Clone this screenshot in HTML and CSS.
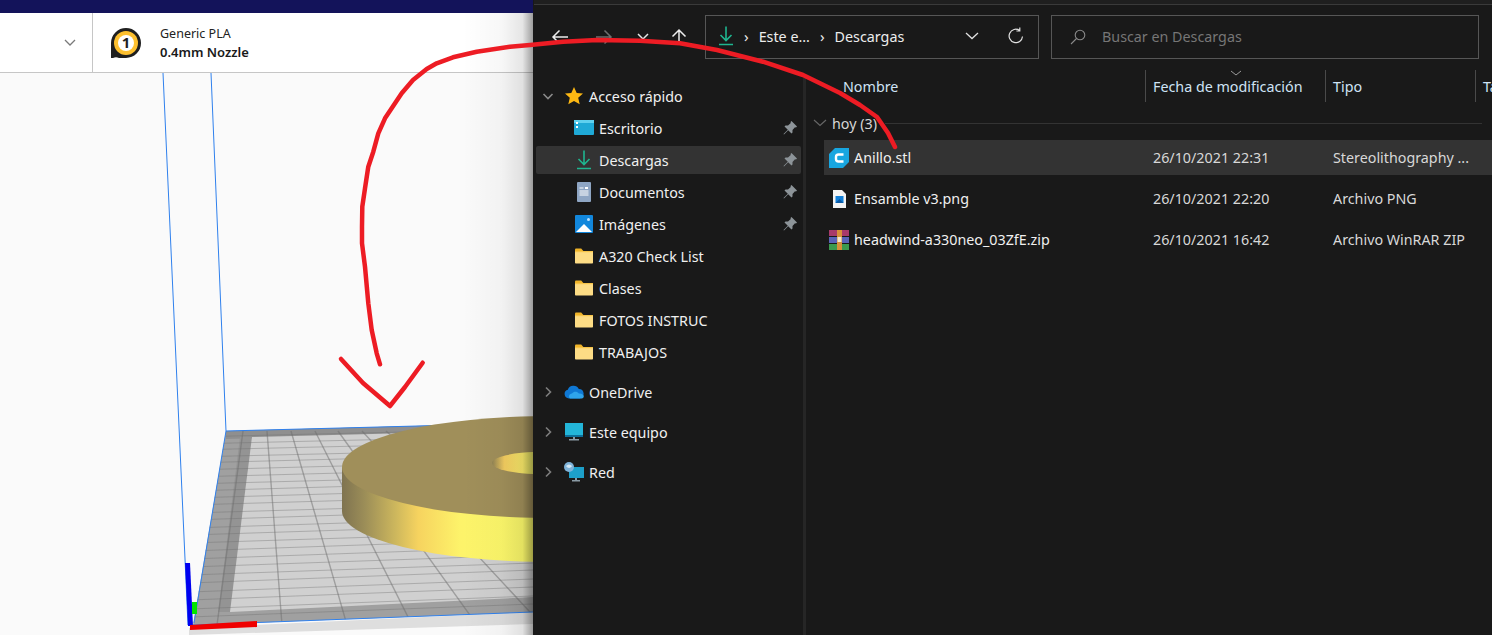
FILE: index.html
```html
<!DOCTYPE html>
<html lang="es">
<head>
  <meta charset="UTF-8" />
  <title>Descargas</title>
  <link rel="stylesheet" href="styles.css">
</head>
<body>
  <svg class="defs" width="0" height="0">
    <symbol id="folder" viewBox="0 0 20 16">
      <path d="M1 3V1.500C1 1 1.400.6 2 .6h5.200l2.200 2.400z" fill="#f0b429"/>
      <rect x="1" y="3" width="18" height="12.600" rx=".8" fill="#fddc85"/>
      <rect x="1" y="3" width="18" height="1.200" fill="#f7c448"/>
    </symbol>
    <symbol id="pin" viewBox="0 0 14 14">
      <path d="M8.500 0L14 5.500 13 6.500 12 6.200 9.500 9V11.500L8.500 12.500 5.200 9.200 1 13.500.5 13 4.800 8.800 1.500 5.500 2.500 4.500H5L7.800 2 7.500 1z" fill="#8d9499"/>
    </symbol>
    <symbol id="download" viewBox="0 0 16 20">
      <path d="M8 .5v14M2.500 9L8 14.500 13.500 9M1 18.500h14" fill="none" stroke="#1fb58f" stroke-width="1.600"/>
    </symbol>
    <symbol id="chev-right" viewBox="0 0 12 12">
      <path d="M4 1.500L8.500 6 4 10.500" fill="none" stroke="#7d7d7d" stroke-width="1.600"/>
    </symbol>
    <symbol id="chev-down" viewBox="0 0 12 12">
      <path d="M1.500 4L6 8.500 10.500 4" fill="none" stroke="#8a8a8a" stroke-width="1.600"/>
    </symbol>
  </svg>

  <div class="slicer">
    <div class="slicer-title"></div>
    <div class="slicer-bar">
      <div class="printer-select">
        <svg class="select-chev" width="12" height="8" viewBox="0 0 12 8"><path d="M1 1l5 5 5-5" fill="none" stroke="#7a7a7a" stroke-width="1.300"/></svg>
      </div>
      <div class="material">
        <svg class="nozzle" width="32" height="32" viewBox="0 0 32 32">
          <path d="M1 31V16A15 15 0 1 1 16 31H9A6 6 0 0 0 3 31z" fill="#1f1f1f"/>
          <circle cx="16" cy="16" r="12" fill="#fdc02f"/>
          <circle cx="16" cy="16" r="8" fill="#fff"/>
          <text class="nozzle-num" x="16" y="21" text-anchor="middle">1</text>
        </svg>
        <div class="material-text">
          <div class="material-name">Generic PLA</div>
          <div class="material-size">0.4mm Nozzle</div>
        </div>
      </div>
    </div>
    <div class="viewport">
      <svg class="scene" width="533" height="562" viewBox="0 73 533 562">
        <defs>
          <linearGradient id="ringSide" gradientUnits="userSpaceOnUse" x1="342" y1="0" x2="533" y2="0">
            <stop offset="0" stop-color="#7f7350"/>
            <stop offset=".12" stop-color="#9c8e58"/>
            <stop offset=".28" stop-color="#cdb75d"/>
            <stop offset=".4" stop-color="#f6d35f"/>
            <stop offset=".62" stop-color="#fdf36a"/>
            <stop offset="1" stop-color="#fdfb6b"/>
          </linearGradient>
          <linearGradient id="ringHole" gradientUnits="userSpaceOnUse" x1="492" y1="0" x2="533" y2="0">
            <stop offset="0" stop-color="#8f8254"/>
            <stop offset=".3" stop-color="#f4cd60"/>
            <stop offset=".6" stop-color="#fbe468"/>
            <stop offset="1" stop-color="#f6f46b"/>
          </linearGradient>
          <clipPath id="bedClip"><polygon points="226,431 533,423 533,612 193,625"/></clipPath>
        </defs>
        <polygon points="189,628 533,612 533,624 189,635" fill="#dedede"/>
        <polygon points="226,431 533,423 533,612 193,625" fill="#a0a0a0"/>
        <polygon points="226,431 533,423 533,431 226,439" fill="#8f8f8f"/>
        <polygon points="240,437 252,437 230,612 218,612" fill="#949494"/>
        <polygon points="252,437 533,430 533,597 230,612" fill="#d0d0d0"/>
        <g clip-path="url(#bedClip)" fill="none" stroke="#6e6e6e">
          <path stroke-opacity=".5" stroke-width="1.400" d="M243 431L217 625M267 431L282 625M291 431L347 625M315 431L412 625M338 431L477 625M362 431L542 625M386 431L607 625M410 431L672 625M434 431L737 625M458 431L802 625M482 431L867 625M506 431L932 625"/>
          <path stroke-opacity=".38" stroke-width="1" d="M190 437l343-8M190 444l343-8M190 450l343-8M190 457l343-8M190 463l343-9M190 470l343-9M190 477l343-9M190 484l343-9M190 491l343-10M190 498l343-10M190 505l343-10M190 513l343-10M190 520l343-11M190 528l343-11M190 535l343-11M190 543l343-11M190 551l343-12M190 559l343-12M190 567l343-12M190 575l343-12M190 583l343-13M190 592l343-13M190 600l343-13M190 609l343-13M190 617l343-13"/>
        </g>
        <g fill="none" stroke="#2f80ed" stroke-width="1">
          <path d="M163 73L188 625M211 73L226 431M226 431L533 423M226 431L194 623M193 625L533 612"/>
        </g>
        <ellipse cx="550" cy="511" rx="208" ry="51" fill="url(#ringSide)"/>
        <rect x="342" y="467" width="200" height="44" fill="url(#ringSide)"/>
        <ellipse cx="550" cy="467" rx="208" ry="51" fill="#a08f5a"/>
        <ellipse cx="540" cy="463" rx="48" ry="11" fill="url(#ringHole)"/>
        <polygon points="185,563 190,563 193,626 188,626" fill="#0000f0"/>
        <rect x="192" y="602" width="5" height="12" fill="#00e600"/>
        <polygon points="190,625 257,621 257,627 190,630" fill="#f00000"/>
      </svg>
    </div>
    <div class="window-shadow"></div>
  </div>

  <div class="explorer">
    <div class="explorer-top"></div>
    <div class="toolbar">
      <div class="nav-btns">
        <svg class="nav-back" width="18" height="16" viewBox="0 0 18 16"><path d="M17 8H2M8.500 1.500L2 8l6.500 6.500" fill="none" stroke="#ececec" stroke-width="1.500"/></svg>
        <svg class="nav-forward" width="18" height="16" viewBox="0 0 18 16"><path d="M1 8h15M9.500 1.500L16 8l-6.500 6.500" fill="none" stroke="#6e6e6e" stroke-width="1.500"/></svg>
        <svg class="nav-recent" width="12" height="8" viewBox="0 0 12 8"><path d="M1 1l5 5 5-5" fill="none" stroke="#e6e6e6" stroke-width="1.500"/></svg>
        <svg class="nav-up" width="16" height="18" viewBox="0 0 16 18"><path d="M8 17V2M1.500 8.500L8 2l6.500 6.500" fill="none" stroke="#ececec" stroke-width="1.500"/></svg>
      </div>
      <div class="address-box">
        <svg class="address-icon" width="16" height="20"><use href="#download"/></svg>
        <span class="crumb-sep">›</span>
        <span class="crumb">Este e...</span>
        <span class="crumb-sep">›</span>
        <span class="crumb">Descargas</span>
        <svg class="address-chev" width="14" height="8" viewBox="0 0 14 8"><path d="M1 1l6 5.500L13 1" fill="none" stroke="#e0e0e0" stroke-width="1.300"/></svg>
        <svg class="address-refresh" width="18" height="18" viewBox="0 0 18 18"><path d="M15.500 9.500A6.700 6.700 0 1 1 12.600 3.400M12.800 .6v3.400H9.400" fill="none" stroke="#e0e0e0" stroke-width="1.200"/></svg>
      </div>
      <div class="search-box">
        <svg width="16" height="16" viewBox="0 0 16 16"><circle cx="10" cy="6" r="4.800" fill="none" stroke="#8a8a8a" stroke-width="1.100"/><path d="M6.500 9.500L1 15" stroke="#8a8a8a" stroke-width="1.100"/></svg>
        <span class="search-text">Buscar en Descargas</span>
      </div>
    </div>

    <div class="main">
      <div class="nav-pane">
        <div class="nav-item root">
          <svg class="nav-chev" width="12" height="12"><use href="#chev-down"/></svg>
          <svg width="20" height="20" viewBox="0 0 20 20"><path d="M10 1l2.700 6 6.300.6-4.800 4.200 1.500 6.500L10 14.900l-5.700 3.400 1.500-6.500L1 7.600 7.300 7z" fill="#fdb813"/></svg>
          <span>Acceso rápido</span>
        </div>
        <div class="nav-item">
          <svg width="20" height="16" viewBox="0 0 20 16"><rect width="20" height="15" rx="1" fill="#1fa9d6"/><rect y="0" width="20" height="3" fill="#5fd0ee"/><rect x="2" y="2" width="2" height="2" fill="#fff"/><rect x="2" y="6" width="2" height="2" fill="#fff"/></svg>
          <span>Escritorio</span>
          <svg class="pin" width="14" height="14"><use href="#pin"/></svg>
        </div>
        <div class="nav-item selected">
          <svg width="20" height="20" viewBox="-2 0 20 20"><use href="#download" width="16" height="20"/></svg>
          <span>Descargas</span>
          <svg class="pin" width="14" height="14"><use href="#pin"/></svg>
        </div>
        <div class="nav-item">
          <svg width="20" height="20" viewBox="0 0 20 20"><rect x="3" y="0" width="14" height="20" rx="1" fill="#8fa6c4"/><path d="M11 5h3v2h-3z" fill="#fff"/><path d="M5.500 6h4M5.500 9h9M5.500 11h9M5.500 13h9" stroke="#fff" stroke-width="1"/></svg>
          <span>Documentos</span>
          <svg class="pin" width="14" height="14"><use href="#pin"/></svg>
        </div>
        <div class="nav-item">
          <svg width="20" height="18" viewBox="0 0 20 18"><rect x="1" width="18" height="18" rx="1" fill="#1287dc"/><path d="M2 17l8-8 8 8z" fill="#fff"/><circle cx="14.500" cy="4.500" r="1.500" fill="#bfe3ff"/></svg>
          <span>Imágenes</span>
          <svg class="pin" width="14" height="14"><use href="#pin"/></svg>
        </div>
        <div class="nav-item"><svg width="20" height="16"><use href="#folder"/></svg><span>A320 Check List</span></div>
        <div class="nav-item"><svg width="20" height="16"><use href="#folder"/></svg><span>Clases</span></div>
        <div class="nav-item"><svg width="20" height="16"><use href="#folder"/></svg><span>FOTOS INSTRUC</span></div>
        <div class="nav-item"><svg width="20" height="16"><use href="#folder"/></svg><span>TRABAJOS</span></div>

        <div class="nav-item root tall first-tall">
          <svg class="nav-chev" width="12" height="12"><use href="#chev-right"/></svg>
          <svg width="20" height="14" viewBox="0 0 20 14"><path d="M5 13.500A4.500 4.500 0 0 1 3.800 4.700 6 6 0 0 1 14.800 4a4.800 4.800 0 0 1 1 9.500z" fill="#0f78d4"/><path d="M6 13.500c-2-1.800-1-4.700 2-5 1.800-2.600 5.500-2.200 6.800 0 2.500-.4 5.200 1 5 3.100-.1 1-.8 1.900-2 1.900z" fill="#2ea4ec"/></svg>
          <span>OneDrive</span>
        </div>
        <div class="nav-item root tall">
          <svg class="nav-chev" width="12" height="12"><use href="#chev-right"/></svg>
          <svg width="20" height="18" viewBox="0 0 20 18"><rect x="1" width="18" height="13" fill="#23b5d8"/><rect x="1" y="12" width="18" height="2" fill="#0d6f9a"/><rect x="9" y="14" width="2" height="2" fill="#8a9aa4"/><rect x="5" y="16" width="10" height="1.500" fill="#8a9aa4"/></svg>
          <span>Este equipo</span>
        </div>
        <div class="nav-item root tall">
          <svg class="nav-chev" width="12" height="12"><use href="#chev-right"/></svg>
          <svg width="20" height="20" viewBox="0 0 20 20"><rect x="5" y="5" width="15" height="11" fill="#1d9fc9"/><rect x="11" y="16" width="2" height="2" fill="#8a9aa4"/><rect x="8" y="18" width="8" height="1.500" fill="#8a9aa4"/><circle cx="5" cy="5" r="5" fill="#7fb3d9"/><path d="M2 4c2-2 4-2 6 0-1 2-4 3-6 0z" fill="#d5e8f5"/></svg>
          <span>Red</span>
        </div>
      </div>

      <div class="files">
        <div class="col-header">
          <div class="col col-name">Nombre</div>
          <div class="col col-date">Fecha de modificación
            <svg class="sort-chev" width="12" height="6" viewBox="0 0 12 6"><path d="M1 1l5 4 5-4" fill="none" stroke="#9a9a9a" stroke-width="1"/></svg>
          </div>
          <div class="col col-type">Tipo</div>
          <div class="col col-size">Tamaño</div>
        </div>

        <div class="group">
          <svg width="14" height="8" viewBox="0 0 14 8"><path d="M1 1l6 5.500L13 1" fill="none" stroke="#666" stroke-width="1.200"/></svg>
          <span>hoy (3)</span>
          <div class="group-line"></div>
        </div>

        <div class="file-row selected">
          <div class="file-name">
            <svg width="20" height="20" viewBox="0 0 20 20"><path d="M6 0h14v14l-6 6H0V6z" fill="#18a6e0"/><path d="M14.500 6.500H9.500Q7 6.500 7 9v2q0 2.500 2.500 2.500h5" fill="none" stroke="#fff" stroke-width="2.400"/></svg>
            <span>Anillo.stl</span>
          </div>
          <div>26/10/2021 22:31</div>
          <div>Stereolithography ...</div>
        </div>
        <div class="file-row">
          <div class="file-name">
            <svg width="20" height="20" viewBox="0 0 20 20"><path d="M4 1h9l4 4v14H4z" fill="#f4f4f4"/><rect x="6.500" y="7" width="8" height="7" fill="#1380d8"/><path d="M6.500 14l4-4 4 4z" fill="#0b5aa6"/></svg>
            <span>Ensamble v3.png</span>
          </div>
          <div>26/10/2021 22:20</div>
          <div>Archivo PNG</div>
        </div>
        <div class="file-row">
          <div class="file-name">
            <svg width="20" height="20" viewBox="0 0 20 20"><rect y="0" width="20" height="6" fill="#a83a6a"/><rect y="7" width="20" height="6" fill="#5a63b8"/><rect y="14" width="20" height="6" fill="#3c9a4e"/><rect x="8" width="5" height="20" fill="#d8903a"/><rect x="8.500" y="7" width="4" height="5" fill="#f0e8d0"/></svg>
            <span>headwind-a330neo_03ZfE.zip</span>
          </div>
          <div>26/10/2021 16:42</div>
          <div>Archivo WinRAR ZIP</div>
        </div>
      </div>
    </div>
  </div>

  <!-- trazo rojo dibujado encima de la captura -->
  <svg class="annotation" width="1492" height="635" viewBox="0 0 1492 635">
    <path d="M895 147L888 133L877 117L860 105L840 93L803 75L763 61.700L717 50L680 43.300L640 40.700L597 40L563 41.700L530 45L510 46.700L476.700 51.700L453 57.300L436.700 63.300L426.700 69L413 80L401.700 93.300L385 118.300L378.300 133.300L373.300 151.700L368.300 166.700L365 188.300L362.300 206.700L362 226.700L362 243.300L365 266.700L368.300 303.300L371.700 330L376.700 353.300L380 364.300"/>
    <path d="M341 359L363 383L390 406L405 387L422.700 362.700"/>
  </svg>
</body>
</html>
```

FILE: styles.css
```css
* { margin:0; padding:0; box-sizing:border-box; }
html, body { height:100%; }
body {
  display:flex;
  overflow:hidden;
  position:relative;
  background:#191919;
  font-family:"Noto Sans",sans-serif;
}
.defs { position:absolute; }
svg { flex:none; display:block; }

/* ventana del laminador */
.slicer {
  position:relative;
  width:534px;
  height:635px;
  flex:none;
  overflow:hidden;
  background:#fafafa;
  border-right:1px solid #191919;
  display:flex;
  flex-direction:column;
}
.slicer-title { height:13px; background:#13135a; }
.slicer-bar {
  height:60px;
  background:#fff;
  border-bottom:1px solid #c6c6c6;
  display:flex;
}
.printer-select {
  width:93px;
  border-right:1px solid #c6c6c6;
  display:flex;
  align-items:center;
  justify-content:flex-end;
  padding-right:16px;
}
.material {
  display:flex;
  align-items:center;
  padding-left:17px;
  gap:18px;
}
.nozzle-num { font-size:15px; font-weight:700; fill:#1f1f1f; }
.material-name { font-size:12.500px; line-height:18px; color:#222; }
.material-size { font-size:13px; line-height:18px; font-weight:600; color:#1a1a1a; }
.viewport { flex:1; }
.window-shadow {
  position:absolute;
  top:13px;
  right:0;
  bottom:0;
  width:70px;
  background:linear-gradient(to right, rgba(0,0,0,0) 0%, rgba(0,0,0,.03) 55%, rgba(0,0,0,.1) 85%, rgba(0,0,0,.38) 100%);
}

/* explorador */
.explorer {
  flex:1;
  min-width:0;
  display:flex;
  flex-direction:column;
  color:#f0f0f0;
  font-size:14.300px;
}
.explorer-top {
  height:5px;
  background:#1f1f1f;
  border-bottom:1px solid #3a3a3a;
}
.toolbar {
  height:65px;
  display:flex;
  padding:10px 13px 11px 0;
}
.nav-btns {
  width:171px;
  flex:none;
  display:flex;
  align-items:center;
  padding-left:17px;
}
.nav-forward { margin-left:26px; }
.nav-recent { margin-left:24px; }
.nav-up { margin-left:22px; }
.address-box {
  width:334px;
  flex:none;
  border:1px solid #565656;
  display:flex;
  align-items:center;
  padding:0 0 2px 12px;
  color:#ececec;
}
.address-icon { margin-right:10px; }
.crumb-sep { margin-right:10px; font-size:15px; }
.crumb { margin-right:10px; }
.address-chev { margin-left:auto; margin-right:28px; }
.address-refresh { margin-right:13px; }
.search-box {
  flex:1;
  margin-left:12px;
  border:1px solid #565656;
  display:flex;
  align-items:center;
  padding:0 0 1px 18px;
  gap:16px;
  color:#767676;
}

.main { flex:1; display:flex; min-height:0; }
.nav-pane {
  width:272px;
  flex:none;
  padding:4px 0 0 2px;
  display:flex;
  flex-direction:column;
  gap:4px;
  margin-top:8px;
  border-right:3px solid #262626;
}
.nav-item {
  height:28px;
  width:265px;
  flex:none;
  display:flex;
  align-items:center;
  padding-left:38px;
  gap:5px;
}
.nav-item.selected { background:#333; border-radius:2px; }
.nav-item.root { padding-left:6px; }
.nav-chev { margin-right:5px; }
.nav-item.tall { height:36px; }
.nav-item.first-tall { margin-top:4px; }
.pin { margin-left:auto; margin-right:4px; }

.files { flex:1; min-width:0; overflow:hidden; }
.col-header {
  height:32px;
  display:flex;
  color:#cfe3f5;
}
.col { flex:none; height:32px; padding:2px 0 0 7px; line-height:30px; white-space:nowrap; }
.col-name { width:339px; padding-left:37px; }
.col-date { width:180px; border-left:1px solid #4a4a4a; position:relative; }
.col-type { width:150px; border-left:1px solid #4a4a4a; }
.col-size { border-left:1px solid #4a4a4a; }
.sort-chev { position:absolute; left:84px; top:0; }
.group {
  height:38px;
  padding:4px 10px 0 7px;
  display:flex;
  align-items:center;
  gap:5px;
  color:#d6d6d6;
}
.group-line { flex:1; height:1px; background:#333; margin-left:3px; }
.file-row {
  height:35px;
  margin-left:18px;
  margin-bottom:6px;
  display:grid;
  grid-template-columns:329px 180px 1fr;
  align-items:center;
  white-space:nowrap;
  color:#d8d8d8;
}
.file-row.selected { background:#333; }
.file-name { display:flex; align-items:center; gap:5px; padding-left:5px; color:#f0f0f0; }

/* trazo rojo */
.annotation { position:absolute; left:0; top:0; pointer-events:none; }
.annotation path {
  fill:none;
  stroke:#ed1c24;
  stroke-width:4.500;
  stroke-linecap:round;
  stroke-linejoin:round;
}
```
